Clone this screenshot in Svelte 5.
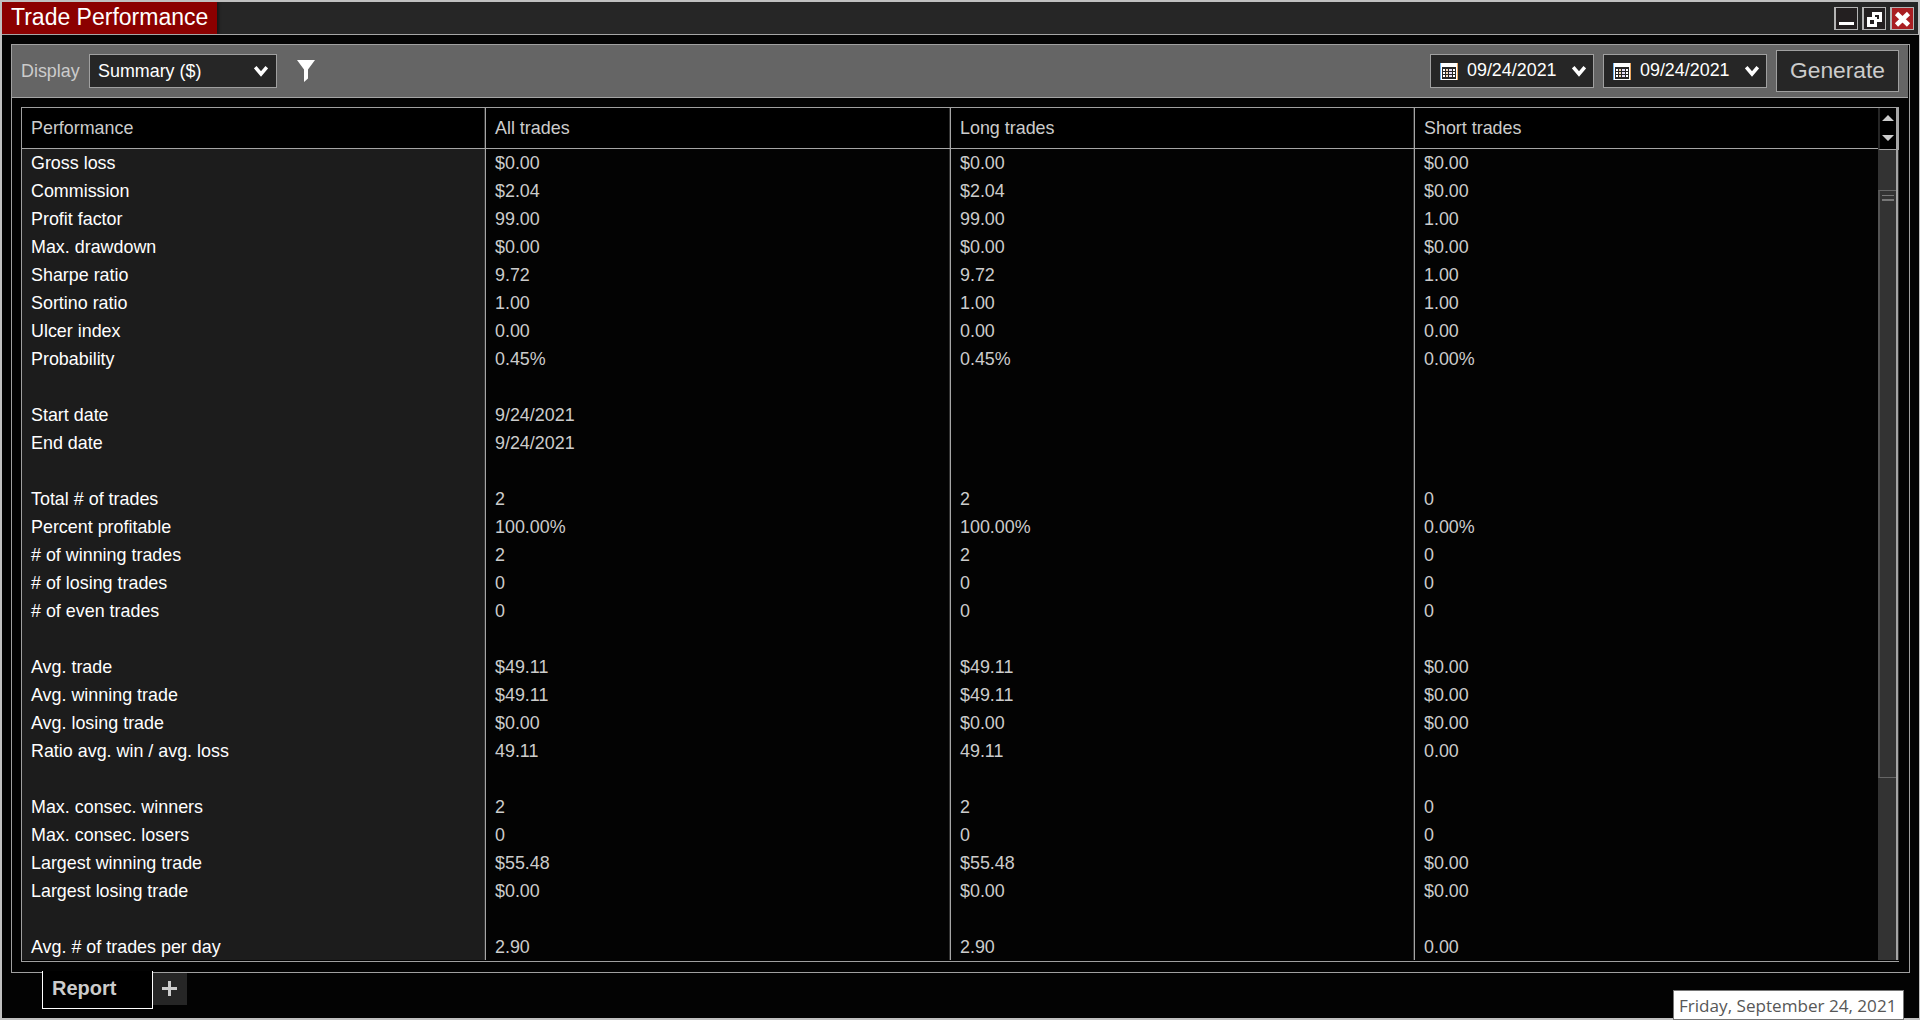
<script lang="ts">
  type Row = [string, string?, string?, string?];

  const columns = ["Performance", "All trades", "Long trades", "Short trades"];

  const rows: Row[] = [
    ["Gross loss", "$0.00", "$0.00", "$0.00"],
    ["Commission", "$2.04", "$2.04", "$0.00"],
    ["Profit factor", "99.00", "99.00", "1.00"],
    ["Max. drawdown", "$0.00", "$0.00", "$0.00"],
    ["Sharpe ratio", "9.72", "9.72", "1.00"],
    ["Sortino ratio", "1.00", "1.00", "1.00"],
    ["Ulcer index", "0.00", "0.00", "0.00"],
    ["Probability", "0.45%", "0.45%", "0.00%"],
    [""],
    ["Start date", "9/24/2021"],
    ["End date", "9/24/2021"],
    [""],
    ["Total # of trades", "2", "2", "0"],
    ["Percent profitable", "100.00%", "100.00%", "0.00%"],
    ["# of winning trades", "2", "2", "0"],
    ["# of losing trades", "0", "0", "0"],
    ["# of even trades", "0", "0", "0"],
    [""],
    ["Avg. trade", "$49.11", "$49.11", "$0.00"],
    ["Avg. winning trade", "$49.11", "$49.11", "$0.00"],
    ["Avg. losing trade", "$0.00", "$0.00", "$0.00"],
    ["Ratio avg. win / avg. loss", "49.11", "49.11", "0.00"],
    [""],
    ["Max. consec. winners", "2", "2", "0"],
    ["Max. consec. losers", "0", "0", "0"],
    ["Largest winning trade", "$55.48", "$55.48", "$0.00"],
    ["Largest losing trade", "$0.00", "$0.00", "$0.00"],
    [""],
    ["Avg. # of trades per day", "2.90", "2.90", "0.00"],
  ];

  let fromDate = $state("09/24/2021");
  let toDate = $state("09/24/2021");
</script>

{#snippet chevron()}
  <svg class="chevron" width="14" height="11" viewBox="0 0 14 11">
    <path d="M1.2 1.2 L7 8 L12.8 1.2" fill="none" stroke="#fff" stroke-width="3.5" />
  </svg>
{/snippet}

{#snippet datePicker(value: string)}
  <button class="field date" type="button">
    <svg width="18" height="17" viewBox="0 0 18 17">
      <path d="M0 0h18v17h-18z" fill="#fff" />
      <path d="M2 4h14v12h-14z" fill="#262626" />
      <path d="M0 0h1v17h-1z" fill="#6fb4f0" />
      <path d="M17 0h1v17h-1z" fill="#eda65c" />
      {#each [6, 9, 12] as y}
        <rect x="3" {y} width="2" height="2" fill="#fff" />
        <rect x="6" {y} width="2" height="2" fill="#f3d9b8" />
        <rect x="9" {y} width="3" height="2" fill="#e2dcf6" />
        <rect x="13" {y} width="2" height="2" fill="#fff" />
      {/each}
    </svg>
    <span class="date-text">{value}</span>
    {@render chevron()}
  </button>
{/snippet}

<div class="window">
  <header class="titlebar">
    <h1 class="title">Trade Performance</h1>
    <div class="controls">
      <button class="control" type="button" aria-label="Minimize">
        <svg width="21" height="20" viewBox="0 0 21 20">
          <path d="M3 13h15v3h-15z" fill="#fff" />
        </svg>
      </button>
      <button class="control" type="button" aria-label="Restore">
        <svg width="21" height="20" viewBox="0 0 21 20" shape-rendering="crispEdges">
          <path d="M8 3h10v10h-10z" fill="#fff" />
          <path d="M11 6h4v4h-4z" fill="#231f20" />
          <path d="M3 8h10v10h-10z" fill="#fff" />
          <path d="M6 11h4v4h-4z" fill="#231f20" />
        </svg>
      </button>
      <button class="control close" type="button" aria-label="Close">
        <svg width="21" height="20" viewBox="0 0 21 20">
          <path d="M4.5 4.5 L16.5 16 M16.5 4.5 L4.5 16" stroke="#fff" stroke-width="4.6" />
        </svg>
      </button>
    </div>
  </header>

  <main class="panel">
    <div class="toolbar">
      <span class="label">Display</span>
      <button class="field display" type="button">
        <span>Summary ($)</span>
        {@render chevron()}
      </button>
      <svg class="filter" width="18" height="22" viewBox="0 0 18 22">
        <path d="M0 0h18L11 9.5V18.5L7 22V9.5z" fill="#fff" />
      </svg>
      <div class="range">
        {@render datePicker(fromDate)}
        {@render datePicker(toDate)}
        <button class="generate" type="button">Generate</button>
      </div>
    </div>

    <section class="grid">
      <div class="table">
        <div class="row head">
          {#each columns as column}
            <div class="cell">{column}</div>
          {/each}
        </div>
        <div class="body">
          {#each rows as row}
            <div class="row">
              {#each columns as _, i}
                <div class="cell">{row[i] ?? ""}</div>
              {/each}
            </div>
          {/each}
        </div>
      </div>
      <div class="scrollbar">
        <div class="arrows">
          <svg width="12" height="26" viewBox="0 0 12 26">
            <path d="M0 6L6 0L12 6z M0 20L6 26L12 20z" fill="#ccc" />
          </svg>
        </div>
        <div class="track">
          <div class="thumb"><span class="grip"></span></div>
        </div>
      </div>
    </section>
  </main>

  <footer class="tabs">
    <button class="tab" type="button">Report</button>
    <button class="add" type="button" aria-label="Add tab">
      <svg width="15" height="15" viewBox="0 0 15 15" shape-rendering="crispEdges">
        <path d="M6 0h3v6h6v3h-6v6h-3v-6h-6v-3h6z" fill="#ccc" />
      </svg>
    </button>
  </footer>

  <div class="tooltip">Friday, September 24, 2021</div>
</div>

<style>
  :global(body) {
    background: #030303;
    overflow: hidden;
  }

  .window,
  .window * {
    box-sizing: border-box;
  }

  .window {
    position: relative;
    display: flex;
    flex-direction: column;
    width: 1920px;
    height: 1020px;
    border: 2px solid #c0c0c0;
    border-right-width: 1px;
    background: #030303;
    color: #ccc;
    font-family: "Liberation Sans", Arial, sans-serif;
    font-size: 17.9px;
  }

  button {
    margin: 0;
    padding: 0;
    border-radius: 0;
    color: inherit;
    font: inherit;
  }

  svg {
    display: block;
    flex: none;
  }

  .titlebar {
    display: flex;
    justify-content: space-between;
    flex: none;
    height: 33px;
    border-bottom: 1px solid #a5a5a5;
    border-right: 1px solid #c0c0c0;
    background: #262626;
  }

  .title {
    width: 215px;
    height: 32px;
    margin: 0;
    padding-left: 9px;
    background: #8b0000;
    box-shadow: 2px 0 2px #181818;
    color: #fff;
    font-size: 23px;
    font-weight: 400;
    line-height: 31px;
    white-space: nowrap;
    clip-path: inset(0 -6px 0 0);
  }

  .controls {
    display: flex;
    gap: 4px;
    padding: 5px 4px 0 0;
  }

  .control {
    width: 24px;
    height: 23px;
    border: 1px solid #b4b4b4;
    border-left-width: 2px;
    background: #231f20;
  }

  .close {
    background: #a91e22;
  }

  .panel {
    display: flex;
    flex-direction: column;
    flex: none;
    height: 929px;
    margin: 9px 9px 0;
    border: 1px solid #a0a0a0;
  }

  .toolbar {
    display: flex;
    align-items: center;
    flex: none;
    height: 53px;
    margin-right: 1px;
    padding: 0 9px;
    border-bottom: 1px solid #a5a5a5;
    background: #656565;
  }

  .label {
    width: 68px;
  }

  .field {
    display: flex;
    align-items: center;
    height: 34px;
    border: 1px solid #a0a0a0;
    background: #262626;
    color: #fff;
  }

  .display {
    justify-content: space-between;
    width: 188px;
    padding: 0 8px;
  }

  .filter {
    margin-left: 20px;
  }

  .range {
    display: flex;
    align-items: center;
    gap: 9px;
    margin-left: auto;
  }

  .date {
    width: 164px;
    padding: 0 7px 0 9px;
  }

  .date-text {
    margin: -2px auto 0 9px;
  }

  .generate {
    width: 123px;
    height: 42px;
    padding-bottom: 2px;
    border: 1px solid #a0a0a0;
    background: #262626;
    font-size: 22.8px;
  }

  .grid {
    display: flex;
    height: 855px;
    margin: 9px 10px 0 9px;
    padding-bottom: 1px;
    border: 1px solid #a0a0a0;
    border-right: none;
  }

  .table {
    flex: 1;
    display: flex;
    flex-direction: column;
  }

  .row {
    display: grid;
    grid-template-columns: 464px 465px 464px 1fr;
    height: 28px;
    line-height: 28px;
  }

  .head {
    height: 41px;
    border-bottom: 1px solid #a5a5a5;
    background: #000;
    line-height: 40px;
  }

  .body {
    flex: 1;
    overflow: hidden;
  }

  .cell {
    padding-left: 9px;
    border-right: 1px solid #a5a5a5;
    box-shadow: inset -1px 0 #333;
    white-space: nowrap;
  }

  .cell:last-child {
    border-right: none;
    box-shadow: none;
  }

  .body .cell:first-child {
    background: #1c1c1c;
    color: #fff;
  }

  .scrollbar {
    display: flex;
    flex-direction: column;
    width: 21px;
    background: #333;
  }

  .arrows {
    display: flex;
    justify-content: center;
    height: 42px;
    padding-top: 7px;
    border: solid #a5a5a5;
    border-width: 0 3px 1px 2px;
    border-left-color: #262626;
    background: #000;
  }

  .track {
    flex: 1;
    margin-right: 1px;
    padding-top: 40px;
    border-right: 2px solid #a5a5a5;
  }

  .thumb {
    height: 588px;
    padding: 4px 2px 0 2px;
    border: 1px solid #666;
    border-width: 1px 0 1px 2px;
    border-left-color: #555;
  }

  .grip {
    display: block;
    height: 6px;
    border: solid #777;
    border-width: 1px 0 2px;
  }

  .tabs {
    display: flex;
    align-items: flex-start;
    margin: -2px 0 0 40px;
  }

  .tab {
    width: 111px;
    height: 38px;
    padding: 0 0 3px 9px;
    border: 1px solid #fff;
    border-top: none;
    background: #000;
    font-size: 20px;
    font-weight: 700;
    text-align: left;
  }

  .add {
    width: 34px;
    height: 32px;
    margin-top: 2px;
    padding: 0 0 1px 9px;
    border: none;
    background: #262626;
  }

  .tooltip {
    position: absolute;
    right: 15px;
    bottom: -2px;
    width: 231px;
    height: 30px;
    padding-left: 5px;
    border: 1px solid #767676;
    background: #fff;
    color: #575757;
    font-family: "Open Sans", "Noto Sans", sans-serif;
    font-size: 17.1px;
    line-height: 29px;
    white-space: nowrap;
  }
</style>
